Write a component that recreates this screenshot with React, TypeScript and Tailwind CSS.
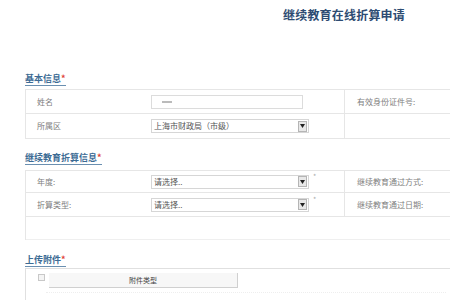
import React from "react";

const font = { fontFamily: '"Noto Sans CJK SC", "Noto Sans", sans-serif' };

function Arrow() {
  return (
    <span className="flex h-[11px] w-[9px] items-center justify-center border border-[#b5b5b5] bg-[#e8e8e8]">
      <svg width="5" height="4" viewBox="0 0 5 4">
        <path d="M0 0h5L2.5 4z" fill="#222" />
      </svg>
    </span>
  );
}

function Select({ text, star }: { text: string; star?: boolean }) {
  return (
    <div className="flex items-start">
      <div className="flex h-[14px] w-[158px] items-center justify-between border border-[#d6d6d6] bg-white pl-[2px] pr-[1px]">
        <span className="text-[8px] leading-none text-[#555]">{text}</span>
        <Arrow />
      </div>
      {star && <span className="ml-[4px] mt-[-2px] text-[7px] leading-none text-[#aaa]">*</span>}
    </div>
  );
}

function Heading({ children }: { children: string }) {
  return (
    <div className="pl-[25px] text-[9px] leading-[10px]">
      <span className="inline-block border-b border-[#6a8fb0] pb-[1px] font-bold text-[#3c6b94]">
        {children}
        <span className="text-[#e0433a]">*</span>
      </span>
    </div>
  );
}

function Row({
  label,
  field,
  right,
  h,
  last,
}: {
  label?: string;
  field?: React.ReactNode;
  right?: string;
  h: string;
  last?: boolean;
}) {
  return (
    <div className={`flex ${h} ${last ? "" : "border-b border-[#e6e6e6]"}`}>
      <div className="flex w-[125px] items-center pl-[11px] text-[8px] text-[#808080]">{label}</div>
      <div className="flex w-[193px] items-center">{field}</div>
      <div className="flex flex-1 items-center border-l border-[#e6e6e6] pl-[12px] text-[8px] text-[#808080]">
        {right}
      </div>
    </div>
  );
}

export default function App() {
  return (
    <div className="h-[300px] w-[450px] overflow-hidden bg-white leading-none" style={font}>
      <div className="pl-[283px] pt-[7px] text-[12px] font-bold leading-[16px] tracking-[0.2px] text-[#2d4b72]">
        继续教育在线折算申请
      </div>

      <div className="mt-[51px]">
        <Heading>基本信息</Heading>
      </div>
      <div className="ml-[25px] mt-[3px] w-[440px] border border-[#e6e6e6]">
        <Row
          h="h-[24px]"
          label="姓名"
          right="有效身份证件号:"
          field={
            <div className="flex h-[14px] w-[152px] items-center border border-[#dcdcdc] pl-[10px]">
              <span className="h-[2px] w-[10px] bg-[#bbb]" />
            </div>
          }
        />
        <Row h="h-[24px]" label="所属区" last field={<Select text="上海市财政局（市级）" />} />
      </div>

      <div className="mt-[14px]">
        <Heading>继续教育折算信息</Heading>
      </div>
      <div className="ml-[25px] mt-[5px] w-[440px] border-t border-l border-[#e6e6e6]">
        <Row h="h-[22px]" label="年度:" right="继续教育通过方式:" field={<Select text="请选择.." star />} />
        <Row h="h-[24px]" label="折算类型:" right="继续教育通过日期:" field={<Select text="请选择.." star />} />
        <div className="h-[23px] border-b border-[#efefef]" />
      </div>

      <div className="mt-[15px]">
        <Heading>上传附件</Heading>
      </div>
      <div className="ml-[25px] mt-[1px] h-[40px] w-[440px] border-t border-l border-[#e0e0e0] pt-[4px]">
        <div className="flex items-start">
          <div className="ml-[12px] mt-[1px] h-[7px] w-[7px] border border-[#c8c8c8] bg-[#f4f4f4]" />
          <div className="ml-[4px] flex h-[15px] w-[189px] items-center justify-center border-r border-b border-[#d0d0d0] bg-[#f7f7f7] text-[7px] text-[#444]">
            附件类型
          </div>
        </div>
        <div className="ml-[20px] mt-[4px] w-[400px] border-t border-dotted border-[#eee]" />
      </div>
    </div>
  );
}
